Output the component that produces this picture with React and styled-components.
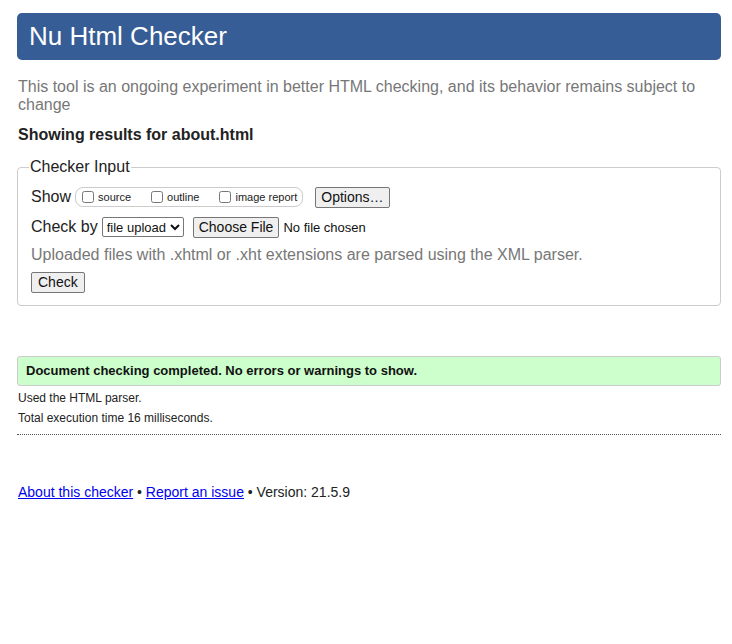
import React from "react";
import styled, { createGlobalStyle } from "styled-components";

const GlobalStyle = createGlobalStyle`
  html, body {
    margin: 0;
    padding: 0;
    background: #fff;
    font-family: "Liberation Sans", Arial, sans-serif;
    color: #222;
  }
  button, select, input {
    font-family: "Liberation Sans", Arial, sans-serif;
  }
`;

const Page = styled.div`
  padding: 13px 11px 0 17px;
  width: 704px;
`;

const Header = styled.h1`
  margin: 0;
  height: 47px;
  box-sizing: border-box;
  padding: 8px 12px 0;
  background: #365d95;
  border-radius: 5px;
  color: #fff;
  font-size: 26px;
  font-weight: normal;
  line-height: 30px;
`;

const Intro = styled.p`
  margin: 18px 0 0 1px;
  color: #777;
  font-size: 16px;
  line-height: 18px;
`;

const Showing = styled.h2`
  margin: 12px 0 0 1px;
  font-size: 16px;
  font-weight: bold;
  line-height: 18px;
  color: #222;
`;

const Fieldset = styled.fieldset`
  margin: 14px 0 0;
  padding: 10px 13px 12px;
  border: 1px solid #ccc;
  border-radius: 4px;
  legend {
    padding: 0 1px;
    margin-left: -2px;
    font-size: 16px;
    line-height: 18px;
    color: #222;
  }
`;

const Row = styled.div`
  display: flex;
  align-items: center;
  gap: ${(p) => p.gap || 6}px;
  height: ${(p) => p.h || 22}px;
  margin-top: ${(p) => p.mt || 0}px;
  font-size: 16px;
  color: #222;
`;

const CheckGroup = styled.span`
  display: inline-flex;
  align-items: center;
  height: 18px;
  padding: 0 5px 0 6px;
  border: 1px solid #ccc;
  border-radius: 8px;
  margin-left: -2px;
  gap: 20px;
  label {
    display: inline-flex;
    align-items: center;
    font-size: 11px;
    color: #222;
  }
  input {
    margin: 0 4px 0 0;
    width: 12px;
    height: 12px;
  }
`;

const Btn = styled.button`
  font-size: 14px;
  padding: 1px ${(p) => p.px || 5}px;
  height: 21px;
  margin-left: ${(p) => p.ml || 0}px;
  border: 1px solid #767676;
  border-radius: 2px;
  background: #efefef;
  color: #111;
`;

const Select = styled.select`
  font-size: 13px;
  height: 20px;
  border: 1px solid #767676;
  border-radius: 2px;
  background: #fff;
  color: #111;
  margin-left: -2px;
`;

const FileBox = styled.span`
  display: inline-flex;
  align-items: center;
  gap: 4px;
  margin-left: 3px;
  font-size: 13px;
  color: #111;
`;

const Hint = styled.p`
  margin: 7px 0 0;
  color: #777;
  font-size: 16px;
  line-height: 20px;
`;

const Success = styled.p`
  margin: 50px 0 0;
  height: 30px;
  box-sizing: border-box;
  padding: 6px 8px 0;
  background: #ccffcc;
  border: 1px solid #ccc;
  border-radius: 3px;
  font-size: 13px;
  font-weight: bold;
  color: #111;
`;

const Note = styled.p`
  margin: ${(p) => p.mt || 0}px 0 0 1px;
  font-size: 12px;
  line-height: 14px;
  color: #222;
`;

const Divider = styled.hr`
  margin: 9px 0 0;
  border: 0;
  border-top: 1px dotted #555;
`;

const Footer = styled.p`
  margin: 49px 0 0 1px;
  font-size: 14px;
  color: #222;
  a {
    color: #0000ee;
  }
`;

export default function App() {
  return (
    <>
      <GlobalStyle />
      <Page>
        <Header>Nu Html Checker</Header>
        <Intro>
          This tool is an ongoing experiment in better HTML checking, and its
          behavior remains subject to change
        </Intro>
        <Showing>Showing results for about.html</Showing>
        <Fieldset>
          <legend>Checker Input</legend>
          <Row>
            Show
            <CheckGroup>
              <label>
                <input type="checkbox" />
                source
              </label>
              <label>
                <input type="checkbox" />
                outline
              </label>
              <label>
                <input type="checkbox" />
                image report
              </label>
            </CheckGroup>
            <Btn ml={6}>Options…</Btn>
          </Row>
          <Row mt={8} gap={6}>
            Check by
            <Select defaultValue="upload">
              <option value="upload">file upload</option>
              <option value="address">address</option>
              <option value="textarea">text input</option>
            </Select>
            <FileBox>
              <Btn>Choose File</Btn>
              No file chosen
            </FileBox>
          </Row>
          <Hint>Uploaded files with .xhtml or .xht extensions are parsed using the XML parser.</Hint>
          <Row mt={6}>
            <Btn px={6}>Check</Btn>
          </Row>
        </Fieldset>
        <Success>Document checking completed. No errors or warnings to show.</Success>
        <Note mt={5}>Used the HTML parser.</Note>
        <Note mt={6}>Total execution time 16 milliseconds.</Note>
        <Divider />
        <Footer>
          <a href="#about">About this checker</a> • <a href="#issue">Report an issue</a> • Version: 21.5.9
        </Footer>
      </Page>
    </>
  );
}
